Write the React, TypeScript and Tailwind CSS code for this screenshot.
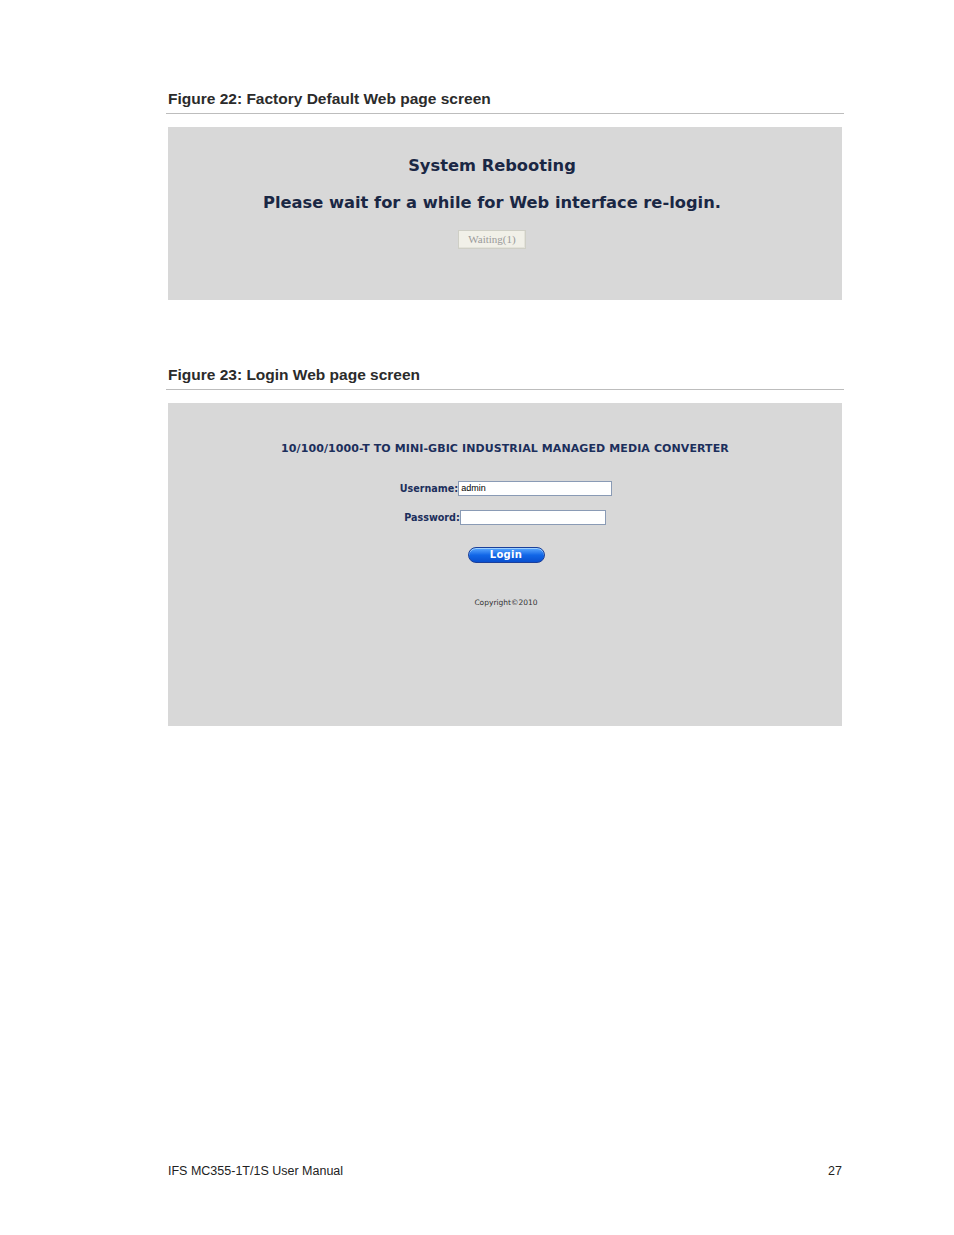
import React from "react";

export default function App() {
  return (
    <div className="w-[954px] h-[1235px] bg-white relative" style={{ fontFamily: '"Liberation Sans", Arial, sans-serif' }}>
      <div className="ml-[166px] w-[678px] flex flex-col">
        {/* Figure 22 */}
        <div className="pt-[90px] pb-[5px] pl-[2px] border-b border-[#bdbdbd] text-[15.5px] leading-[18px] font-bold text-[#2b2b2b]">
          Figure 22: Factory Default Web page screen
        </div>
        <div className="mx-[2px] mt-[13px] h-[173px] pr-[26px] bg-[#d8d8d8] flex flex-col items-center" style={{ fontFamily: '"DejaVu Sans", Verdana, sans-serif' }}>
          <div className="mt-[28px] text-[16.3px] leading-[22px] font-bold text-[#1a2744]">System Rebooting</div>
          <div className="mt-[15px] text-[16.3px] leading-[22px] font-bold text-[#1a2744]">Please wait for a while for Web interface re-login.</div>
          <div
            className="mt-[16px] w-[68px] h-[19px] bg-[#f1f0e8] border border-[#cfcfc6] flex items-center justify-center text-[11px] leading-none text-[#9a9a9a] shadow-[inset_-1px_-1px_0_#e4e3da]"
            style={{ fontFamily: '"Liberation Serif", "Times New Roman", serif' }}
          >
            Waiting(1)
          </div>
        </div>

        {/* Figure 23 */}
        <div className="mt-[66px] pb-[5px] pl-[2px] border-b border-[#bdbdbd] text-[15.5px] leading-[18px] font-bold text-[#2b2b2b]">
          Figure 23: Login Web page screen
        </div>
        <div className="mx-[2px] mt-[13px] h-[323px] bg-[#d8d8d8] flex flex-col items-center" style={{ fontFamily: '"DejaVu Sans", Verdana, sans-serif' }}>
          <div className="mt-[39px] text-[11px] leading-[14px] font-bold text-[#1c2f5c] tracking-[0.1px]">
            10/100/1000-T TO MINI-GBIC INDUSTRIAL MANAGED MEDIA CONVERTER
          </div>
          <div className="mt-[25px] flex items-center pl-[2px]">
            <span className="text-[9.6px] leading-none font-bold text-[#1c2f5c]">Username:</span>
            <div className="w-[154px] h-[15px] bg-white border border-[#8a9bb5] flex items-center pl-[2px] text-[9px] text-black" style={{ fontFamily: '"Liberation Sans", Arial, sans-serif' }}>
              admin
            </div>
          </div>
          <div className="mt-[14px] flex items-center">
            <span className="text-[9.6px] leading-none font-bold text-[#1c2f5c]">Password:</span>
            <div className="w-[146px] h-[15px] bg-white border border-[#8a9bb5]" />
          </div>
          <div className="mt-[22px] ml-[2px] w-[77px] h-[16px] rounded-full border border-[#1b3f9a] bg-gradient-to-b from-[#5aa8ff] via-[#1167e8] to-[#0a4fcf] flex items-center justify-center text-[10px] leading-none font-bold text-white tracking-[0.3px] shadow-[inset_0_1px_0_#9cd0ff]">
            Login
          </div>
          <div className="mt-[36px] ml-[2px] text-[7.5px] leading-none text-[#333]">Copyright©2010</div>
        </div>
      </div>

      {/* Footer */}
      <div className="absolute left-[168px] right-[112px] top-[1164px] flex justify-between text-[12.5px] leading-[14px] text-[#222]">
        <span>IFS MC355-1T/1S User Manual</span>
        <span>27</span>
      </div>
    </div>
  );
}
